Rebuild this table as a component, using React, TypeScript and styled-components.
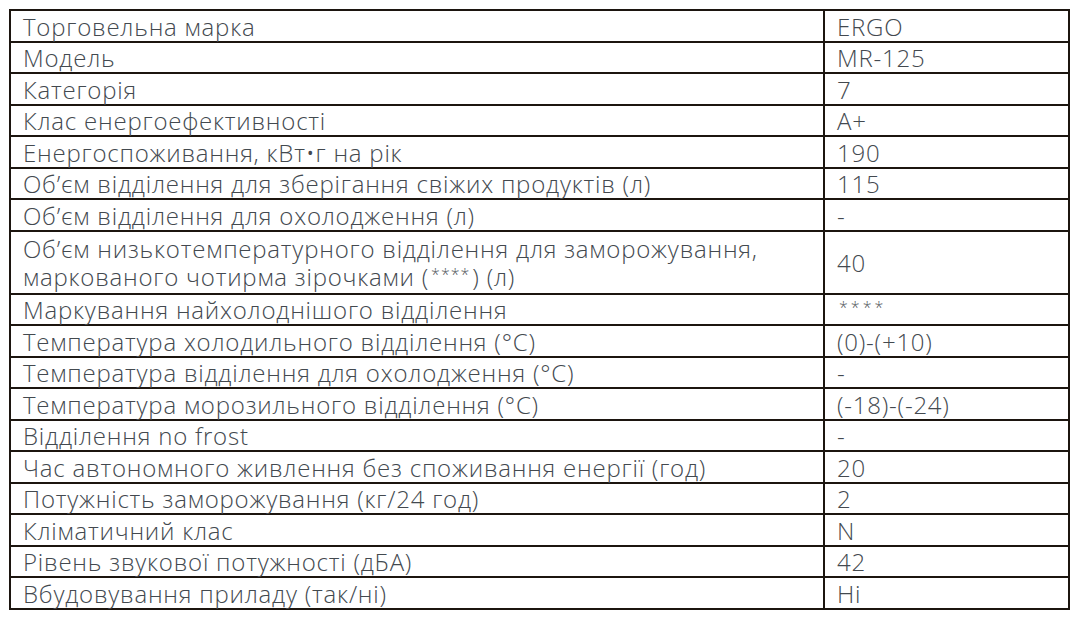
import { FC, ReactNode } from 'react';
import styled, { createGlobalStyle } from 'styled-components';

interface Spec {
  label: ReactNode;
  value: ReactNode;
  tall?: boolean;
}

const LINE = '#1c150f';
const ROW = 31.5;

const Stars = styled.span<{ spread?: boolean }>`
  display: inline-block;
  margin: 0 2px;
  font-size: 16px;
  line-height: 16px;
  letter-spacing: ${({ spread }) => (spread ? '3px' : '1px')};
  vertical-align: 6px;
  color: #575c61;
`;

const specs: Spec[] = [
  { label: 'Торговельна марка', value: 'ERGO' },
  { label: 'Модель', value: 'MR-125' },
  { label: 'Категорія', value: '7' },
  { label: 'Клас енергоефективності', value: 'A+' },
  { label: 'Енергоспоживання, кВт•г на рік', value: '190' },
  { label: 'Об’єм відділення для зберігання свіжих продуктів (л)', value: '115' },
  { label: 'Об’єм відділення для охолодження (л)', value: '-' },
  {
    label: (
      <>
        Об’єм низькотемпературного відділення для заморожування, маркованого чотирма
        зірочками (<Stars>****</Stars>) (л)
      </>
    ),
    value: '40',
    tall: true,
  },
  { label: 'Маркування найхолоднішого відділення', value: <Stars spread>****</Stars> },
  { label: 'Температура холодильного відділення (°C)', value: '(0)-(+10)' },
  { label: 'Температура відділення для охолодження (°C)', value: '-' },
  { label: 'Температура морозильного відділення (°C)', value: '(-18)-(-24)' },
  { label: 'Відділення no frost', value: '-' },
  { label: 'Час автономного живлення без споживання енергії (год)', value: '20' },
  { label: 'Потужність заморожування (кг/24 год)', value: '2' },
  { label: 'Кліматичний клас', value: 'N' },
  { label: 'Рівень звукової потужності (дБА)', value: '42' },
  { label: 'Вбудовування приладу (так/ні)', value: 'Ні' },
];

const GlobalStyle = createGlobalStyle`
  html, body {
    margin: 0;
    padding: 0;
    background: #ffffff;
  }
`;

const App: FC = () => (
  <>
    <GlobalStyle />
    <Page>
      <SpecTable>
        {specs.map((s, i) => (
          <Row key={i} tall={s.tall}>
            <LabelCell>
              <span>{s.label}</span>
            </LabelCell>
            <ValueCell>
              <span>{s.value}</span>
            </ValueCell>
          </Row>
        ))}
      </SpecTable>
    </Page>
  </>
);

const Page = styled.div`
  padding: 9px 0 0 9px;
  font-family: 'Open Sans', 'Liberation Sans', sans-serif;
`;

const SpecTable = styled.div`
  width: 1061px;
  box-sizing: border-box;
  border: 2px solid ${LINE};
  border-bottom: none;
  display: flex;
  flex-direction: column;
`;

const Row = styled.div<{ tall?: boolean }>`
  display: flex;
  height: ${({ tall }) => (tall ? ROW * 2 : ROW)}px;
  box-sizing: border-box;
  border-bottom: 2px solid ${LINE};
`;

const Cell = styled.div`
  display: flex;
  align-items: center;
  box-sizing: border-box;
  padding: 2px 12px 0;
  color: #43494f;
  font-size: 24px;
  font-weight: 300;
  letter-spacing: 0.78px;
  line-height: 28.5px;
  white-space: nowrap;
`;

const LabelCell = styled(Cell)`
  width: 814px;
  flex-shrink: 0;
  border-right: 2px solid ${LINE};
  white-space: normal;
`;

const ValueCell = styled(Cell)`
  flex: 1;
`;

export default App;
